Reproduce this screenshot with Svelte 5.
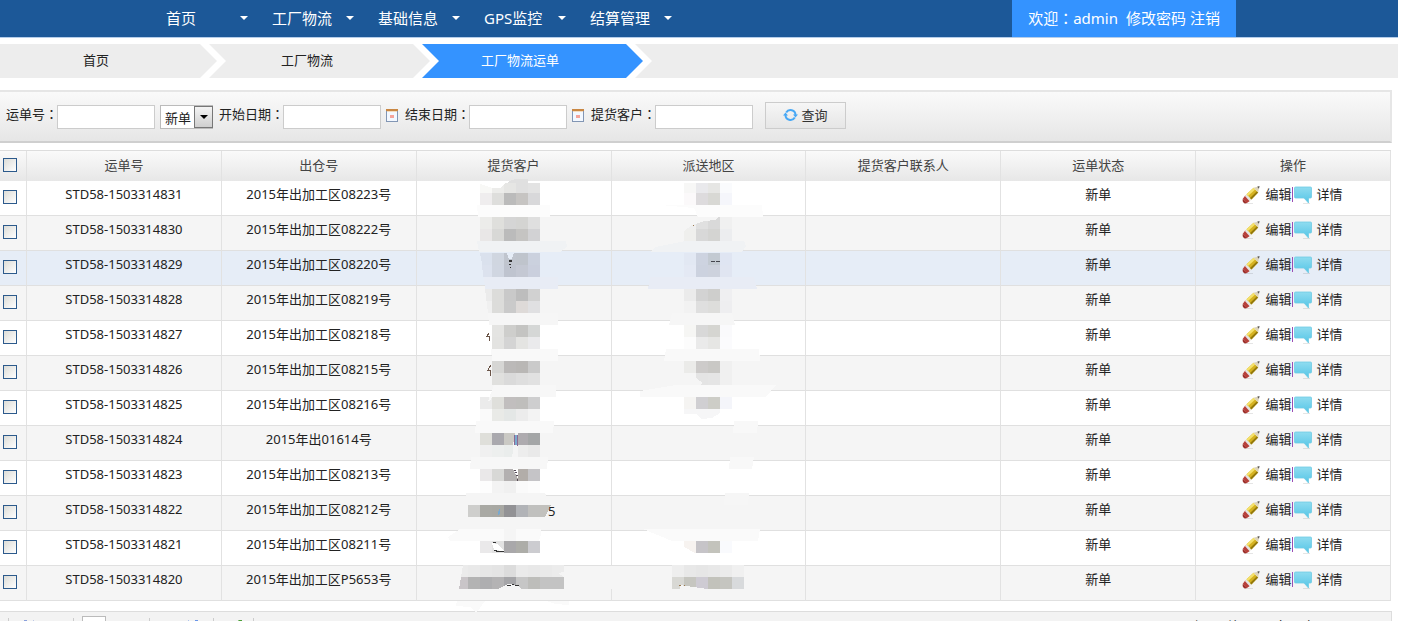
<script>
  const menus = ['首页', '工厂物流', '基础信息', 'GPS监控', '结算管理'];
  const crumbs = ['首页', '工厂物流', '工厂物流运单'];
  const heads = ['运单号', '出仓号', '提货客户', '派送地区', '提货客户联系人', '运单状态', '操作'];
  const outbound = [
    '2015年出加工区08223号', '2015年出加工区08222号', '2015年出加工区08220号',
    '2015年出加工区08219号', '2015年出加工区08218号', '2015年出加工区08215号',
    '2015年出加工区08216号', '2015年出01614号', '2015年出加工区08213号',
    '2015年出加工区08212号', '2015年出加工区08211号', '2015年出加工区P5653号'
  ];
  const rows = outbound.map((out, i) => ({ id: 'STD58-' + (1503314831 - i), out }));

  // Pixelated masks over private values: [x, y, height, cell colours]
  const customerCells = [
    [480, 182, 10, 'f8f8f6 ececea e6e6e4 e0e0e0 e3e3e3'],
    [480, 192, 12, 'efedee dededc bbbbbb c6c4c2 d8d8da'],
    [480, 216, 12, 'ececea dfdfdc d5d5d5 d4d4d2 dfdfdf'],
    [480, 228, 12, 'e9e7e7 d8d8d6 bbbbbb c5c4c2 d2d2d4'],
    [480, 252, 12, 'dae1ed d0d6e0 c0c5ce bfc4cc cbd1de'],
    [480, 264, 12, 'dce2ee d0d6e1 bfc4cf c4c8d3 cacfdd'],
    [480, 288, 12, 'ebebeb dcdcda c9c9c9 bdbdbd d1d1d1'],
    [480, 300, 12, 'f0f0f0 dcdcda cacaca dedad8 e0e0e2'],
    [492, 324, 12, 'e4e4e2 cececc c4c4c2 d5d7d6'],
    [492, 336, 12, 'e3e3e1 d4d4d4 e4e4e2 eaeaec'],
    [492, 360, 12, 'd6d6d4 bbb9b8 b9b7b5 cacaca'],
    [492, 372, 12, 'e0e0de dadada dedede e1e1e1'],
    [480, 396, 12, 'ebebeb dfdfdb c1bebe bfbebc cececf'],
    [480, 408, 12, 'fafafa e9eae7 e4e7e6 ececec f3f3f3'],
    [480, 432, 12, 'dfdfda aaa9ae cac9c4 aeabaf a4a6a7'],
    [480, 444, 12, 'f0f0f0 edefee eaedec ededed e9e9e9'],
    [480, 468, 12, 'eae8e9 d8d8d6 b3b0b0 b2ada9 c5c4c7'],
    [480, 480, 12, 'fdfdfd f3f3f3 f0f0f0 fafafa fcfcfc'],
    [468, 504, 12, 'cececc a9a9a4 a8a8a3 929295 b1b3b7 c0c0be'],
    [480, 540, 12, 'eae9ea e2e2e2 a9a8aa adada8 ccccd0'],
    [468, 564, 12, 'e9e9e9 e6e6e6 e4e4e4 dcdcdc eaeaea e8e8e8 eaeaea ececec'],
    [468, 576, 12, 'b3b3b3 aeaeb0 b4b3b4 a5a5a8 c6c6c6 bdbdba c3c3c3 c3c3c3']
  ];
  const customerShapes = [
    ['480,181 480,183 492,187 500,187 507,180 504,180', 'ffffff'],
    ['507,182 512,179 516,178 528,178 528,182', 'e0e0e0'],
    ['477,204 550,204 550,216 478,216', 'fcfcfc'],
    ['477,240 566,240 567,246 560,251 479,251', 'f0f2f4'],
    ['507,252 514,252 512,258 509,258', 'e6edf7'],
    ['480,252 480,276 483,276 482,262', 'e6edf7'],
    ['484,276 558,276 558,288 485,288', 'e8ecf5'],
    ['480,288 485,288 488,312 480,312', 'f5f5f5'],
    ['488,312 558,312 558,324 489,324', 'f6f6f6'],
    ['491,348 558,348 558,360 492,360', 'f9f9f9'],
    ['494,384 556,384 556,396 492,396 490,400 488,400', 'f7f7f7'],
    ['476,420 554,420 553,432 475,432', 'f9f9f9'],
    ['513,444 515,432 518,432 518,444 518,468 512,462', 'f5f5f5'],
    ['471,456 548,456 547,468 470,468', 'f7f7f7'],
    ['513,468 518,468 518,478', 'ffffff'],
    ['466,492 545,492 547,497 545,504 464,504', 'f5f5f5'],
    ['540,504 551,504 545,516 540,516', 'c2c1bd'],
    ['460,528 541,528 541,534 539,540 450,540 448,536', 'fafafa'],
    ['492,542 498,543 504,550 494,549', 'ffffff'],
    ['504,528 516,528 516,540 504,540', 'f5f5f5'],
    ['463,564 468,564 468,576 461,576', 'ebebeb'],
    ['461,576 468,576 468,588 459,588', 'c9c5c8'],
    ['498,588 508,583 518,584 521,588', 'f5f5f5'],
    ['558,572 595,565 612,565 612,588 600,590 564,588 564,576', 'f5f5f5'],
    ['457,600 485,600 480,607 476,611 470,606 456,605', 'fafafa'],
    ['546,600 569,600 569,604 555,603', 'fafafa']
  ];
  const areaCells = [
    [684, 182, 10, 'f7f7f6 e9e9ec e6e6e4 fafbfd'],
    [684, 192, 12, 'fbf9fa dddbdd d8d8d4 f5f6fb'],
    [684, 216, 12, 'efefef e0e0e0 d9d9d9 f0f0f0'],
    [684, 228, 12, 'efefed d8d8d8 d4d4d2 ecedef'],
    [684, 252, 12, 'e2e8f3 cdd3e0 c3cad2 dfe5f2'],
    [684, 264, 12, 'e4e9f4 ccd2df cdd2dd e0e5f1'],
    [684, 288, 12, 'ebebeb d3d3d3 cececc efeff1'],
    [684, 300, 12, 'f2f2f2 dfdfdf dddddb eeeef0'],
    [684, 324, 12, 'f6f6f4 d8d8d8 d5d5d1 fafafc'],
    [684, 336, 12, 'fcfcfc eaeaea e6e6e4 fbfbfd'],
    [684, 360, 12, 'ebebe9 cdcbca c9c8c5 f0f0f0'],
    [684, 372, 12, 'f5f5f5 e4e4e4 e5e5e5 f0f0f0'],
    [684, 396, 12, 'f5f4f2 d0cfd2 cdcdc7 f4f5fa'],
    [684, 540, 12, 'f7f3f0 c6c4c8 c3c3bc f9fafd'],
    [672, 564, 12, 'eeeeee e8e8e8 e6e6e6 e8e8e8 ebebeb f0f0f0'],
    [672, 576, 12, 'd8d8d4 c6c6c0 cecbd3 c2c2bb c5c5c0 d8dadc']
  ];
  const areaShapes = [
    ['660,204 762,204 763,216 698,216 694,207', 'fcfcfc'],
    ['684,216 718,216 716,219 704,220 692,224 684,230', 'f5f5f5'],
    ['686,240 744,240 746,245 742,251 651,251 655,246', 'f0f2f4'],
    ['650,276 754,276 757,288 648,288', 'e8ecf5'],
    ['672,312 732,312 735,324 669,324', 'f6f6f6'],
    ['666,348 759,348 760,360 664,360', 'f9f9f9'],
    ['684,372 696,372 696,377 703,382 700,384 684,384', 'f5f5f5'],
    ['640,390 676,384 776,384 766,396 640,396', 'f9f9f9'],
    ['684,408 720,408 720,412 712,417 702,418 696,413 684,413', 'f6f6f7'],
    ['734,420 758,420 757,432 733,432', 'f8f8f8'],
    ['730,456 754,456 752,468 729,468', 'f8f8f8'],
    ['725,492 749,492 748,504 724,504', 'f6f6f6'],
    ['643,528 760,528 758,540 672,540', 'fafafa'],
    ['684,546 695,552 684,552', 'ffffff'],
    ['680,584 707,588 680,588', 'f5f5f5']
  ];
</script>

{#snippet mask(cells, shapes)}
  {#each cells as [x, y, h, colours]}
    {#each colours.split(' ') as c, i}
      <rect x={x + i * 12} {y} width="12" height={h} fill={'#' + c} />
    {/each}
  {/each}
  {#each shapes as [points, c]}
    <polygon {points} fill={'#' + c} />
  {/each}
{/snippet}

{#snippet calendar(name)}
  <button class="icon-btn cal" aria-label={name}>
    <svg width="12" height="13" viewBox="0 0 12 13">
      <rect x=".5" y="1.5" width="11" height="11" fill="#f3f8ff" stroke="#8296b4" />
      <rect width="12" height="2" fill="#c98743" />
      <rect x="1" y="2" width="10" height="1" fill="#f4dcc0" />
      <rect x="4" y="6" width="4" height="3" fill="#f5a49b" />
    </svg>
  </button>
{/snippet}

<div class="page">
  <header class="topbar">
    <nav>
      {#each menus as m}
        <button class="menu">{m}<span class="caret"></span></button>
      {/each}
    </nav>
    <div class="user">
      <span class="welcome">欢迎<span class="colon">：</span>admin</span>
      <a href="#password">修改密码</a>
      <a href="#logout">注销</a>
    </div>
  </header>

  <nav class="crumbs">
    {#each crumbs as c, i}
      <a href="#crumb" class="crumb" class:root={i === 0} class:active={i === 2}>{c}</a>
    {/each}
    <span class="tail"></span>
  </nav>

  <form class="search" onsubmit={(e) => e.preventDefault()}>
    <label for="no">运单号<span class="colon">：</span></label>
    <input id="no" type="text" />
    <span class="select">
      <select aria-label="状态"><option>新单</option></select>
      <span class="arrow"><span></span></span>
    </span>
    <label for="from">开始日期<span class="colon">：</span></label>
    <input id="from" type="text" />
    {@render calendar('开始日期')}
    <label for="to">结束日期<span class="colon">：</span></label>
    <input id="to" type="text" />
    {@render calendar('结束日期')}
    <label for="cust">提货客户<span class="colon">：</span></label>
    <input id="cust" type="text" />
    <button class="query">
      <svg width="15" height="14" viewBox="0 0 15 14" fill="none" stroke="#48a8f5" stroke-width="2">
        <path d="M3.200 4.500A5 5 0 0 1 12.500 7M11.800 9.500A5 5 0 0 1 2.500 7" />
        <path d="M10 6.500h5l-2.500 3zM0 7.500h5L2.500 4.500z" fill="#48a8f5" stroke="none" />
      </svg>
      查询
    </button>
  </form>

  <table>
    <colgroup><col class="tick" /></colgroup>
    <thead>
      <tr>
        <th><input type="checkbox" aria-label="全选" /></th>
        {#each heads as h}<th>{h}</th>{/each}
      </tr>
    </thead>
    <tbody>
      {#each rows as r, i}
        <tr class:hover={i === 2}>
          <td><input type="checkbox" aria-label={r.id} /></td>
          <td>{r.id}</td>
          <td>{r.out}</td>
          <td class="masked">
            {#if i === 0}
              <svg class="mask customer" width="180" height="450" viewBox="440 170 180 450" shape-rendering="crispEdges">
                {@render mask(customerCells, customerShapes)}
                <g fill="#333">
                  <path d="M509 259h3v2h-3zM509 263h2v1h-2zM510 266h1v1h-1zM493 541h3v1h-3zM496 550h8v1h-8zM494 549h3v1h-3z" />
                  <path d="M507 584h4v1h-4zM512 583h2v1h-2zM515 584h4v1h-4z" />
                </g>
                <path d="M514 434h1v10h-1zM517 434h1v11h-1z" fill="#8d6a93" />
                <path d="M515 434h2v10h-2zM498 510h1v4h-1zM499 508h1v5h-1z" fill="#79a9cf" />
                <path d="M514 469h2v1h-2zM515 471h2v1h-2zM516 474h2v1h-2zM517 478h1v2h-1z" fill="#554a58" />
                <path d="M489 332l-2 3h2v5M491 364l-3 5h2v6" fill="none" stroke="#6b5548" />
                <text x="548" y="515">5</text>
              </svg>
            {/if}
          </td>
          <td class="masked">
            {#if i === 0}
              <svg class="mask area" width="150" height="450" viewBox="630 170 150 450" shape-rendering="crispEdges">
                {@render mask(areaCells, areaShapes)}
                <path d="M711 260h4v1h-4zM716 260h4v1h-4z" fill="#44454d" />
                <path d="M693 224h1v1h-1zM679 584h2v1h-2zM684 584h1v1h-1z" fill="#9b7a50" />
              </svg>
            {/if}
          </td>
          <td></td>
          <td>新单</td>
          <td>
            <div class="ops">
              <a href="#edit" class="edit">
                <svg width="18" height="18" viewBox="0 0 18 18">
                  <path d="M2 17.500h9" stroke="#000" stroke-opacity=".1" />
                  <path d="M.8 12.800 4.600 17.200 8.200 14.800 3.400 9.200z" fill="#b8403a" />
                  <path d="M.8 12.800Q0 16.800 3 17.400L4.800 17.100z" fill="#9c2f2b" />
                  <path d="M2.900 9.900 7.600 15.200 9.400 13.600 4.500 8.300z" fill="#e5e5e2" />
                  <path d="M4.500 8.300 11.600 1.800 16.200 6.600 9.400 13.600z" fill="#d5b221" />
                  <path d="M4.500 8.300 11.600 1.800 13.200 3.400 6 10z" fill="#f4e16b" />
                  <path d="M8 12.100 15 5.300 16.200 6.600 9.400 13.600z" fill="#94790c" />
                  <path d="M11.600 1.800 17.300 .2 16.200 6.600z" fill="#dcd3bb" />
                  <path d="M15.200.8 17.500.1 17 2.700z" fill="#555" />
                </svg>编辑</a><span class="bar"></span><a href="#detail" class="detail">
                <svg width="18" height="18" viewBox="0 0 18 18">
                  <defs>
                    <linearGradient id={'bubble' + i} x1="0" y1="0" x2="0" y2="1">
                      <stop offset="0" stop-color="#8fdcf0" />
                      <stop offset="1" stop-color="#55c5e6" />
                    </linearGradient>
                  </defs>
                  <path d="M9 17.500h7" stroke="#000" stroke-opacity=".1" />
                  <path d="M1.500 1h15q1 0 1 1v9q0 1-1 1H14.500v5L10 12H1.500q-1 0-1-1V2q0-1 1-1z" fill="url(#{'bubble' + i})" stroke="#6fcbe5" stroke-width=".8" />
                </svg>详情</a>
            </div>
          </td>
        </tr>
      {/each}
    </tbody>
  </table>

  <footer class="pager">
    <div class="tools">
      <i class="sep"></i>
      <button class="icon-btn prev" aria-label="上一页">
        <svg width="12" height="12" viewBox="0 0 12 12" fill="#8aa0dc"><path d="M0 0h3v12H0zM10 0v12L4 6z" /></svg>
      </button>
      <i class="sep"></i>
      <input type="text" aria-label="页码" />
      <i class="sep"></i>
      <button class="icon-btn next" aria-label="下一页">
        <svg width="12" height="12" viewBox="0 0 12 12" fill="#6a96e8"><path d="M9 0h3v12H9zM2 0v12L8 6z" /></svg>
      </button>
      <i class="sep"></i>
      <button class="icon-btn reload" aria-label="刷新">
        <svg width="14" height="14" viewBox="0 0 14 14" fill="none" stroke="#4c9f38" stroke-width="2"><path d="M12 8A5 5 0 1 1 9 2.500" /><path d="M7 0h4v5z" fill="#4c9f38" stroke="none" /></svg>
      </button>
      <i class="sep"></i>
    </div>
    <span class="status">显示从1到12，总 1234 条 。每页显示</span>
  </footer>
</div>

<style>
  :global(body) { background: #fff; }
  .page {
    height: 100vh;
    overflow: hidden;
    font: 13px/20px "Noto Sans", "Noto Sans CJK SC", sans-serif;
    color: #222;
  }
  .page *, .page { box-sizing: border-box; }
  button, input, select { font: inherit; color: inherit; margin: 0; }
  a { color: inherit; text-decoration: none; }
  .colon { font-family: "Noto Sans CJK TC", sans-serif; }

  .topbar {
    display: flex;
    justify-content: space-between;
    height: 38px;
    margin-right: 13px;
    padding: 0 162px 0 166px;
    background: #1c5898;
    border-bottom: 1px solid #b4cdea;
    color: #fff;
    font-size: 15px;
  }
  .topbar nav { display: flex; }
  .menu {
    display: flex;
    align-items: center;
    justify-content: space-between;
    width: 106px;
    padding: 0 24px 2px 0;
    border: 0;
    background: none;
    white-space: nowrap;
  }
  .caret { border: 4px solid transparent; border-top-color: #fff; border-bottom: 0; }
  .user {
    display: flex;
    align-items: center;
    gap: 4px;
    padding: 0 16px 2px;
    background: #3493ff;
    white-space: nowrap;
  }
  .welcome { margin-right: 4px; }

  .crumbs { display: flex; height: 34px; margin: 6px 13px 0 0; }
  .crumb {
    width: 221px;
    margin-left: -8px;
    padding: 6px 25px 0 0;
    text-align: center;
    background: #ededed;
    clip-path: polygon(0 0, calc(100% - 17px) 0, 100% 50%, calc(100% - 17px) 100%, 0 100%, 17px 50%);
  }
  .crumb.root {
    width: 217px;
    margin-left: 0;
    clip-path: polygon(0 0, calc(100% - 17px) 0, 100% 50%, calc(100% - 17px) 100%, 0 100%);
  }
  .crumb.active { background: #3493ff; color: #fff; }
  .tail {
    flex: 1;
    margin-left: -8px;
    background: #ededed;
    clip-path: polygon(0 0, 100% 0, 100% 100%, 0 100%, 17px 50%);
  }

  .search {
    display: flex;
    align-items: flex-start;
    height: 53px;
    margin: 12px 19px 0 0;
    padding: 12px 0 0 6px;
    border: 2px solid #e6e6e6;
    border-left: 0;
    border-bottom-color: #cfcfcf;
    background: linear-gradient(#fafafa, #e6e6e6);
    white-space: nowrap;
  }
  .search label { width: 64px; }
  .search label:first-child { width: 51px; }
  .search input { width: 98px; height: 24px; margin-top: 1px; padding: 0 4px; border: 1px solid #ccc; background: #fff; }
  .select { position: relative; margin: 1px 6px 0 5px; }
  .select select {
    display: block;
    appearance: none;
    width: 53px;
    height: 24px;
    padding: 1px 0 0 4px;
    border: 1px solid #bbb;
    border-radius: 0;
    background: #fff;
  }
  .arrow {
    position: absolute;
    top: 1px;
    right: 0;
    display: grid;
    place-items: center;
    width: 19px;
    height: 22px;
    border: 1px solid #777;
    background: linear-gradient(#f4f4f4, #cfcfcf);
    pointer-events: none;
  }
  .arrow span { border: 4px solid transparent; border-top-color: #000; border-bottom: 0; }
  .icon-btn { display: block; padding: 0; border: 0; background: none; line-height: 0; }
  .cal { margin: 5px 7px 0 5px; }
  .query {
    display: flex;
    align-items: center;
    justify-content: center;
    gap: 3px;
    width: 81px;
    height: 27px;
    margin: -2px 0 0 12px;
    padding: 0 0 2px;
    border: 1px solid #ccc;
    background: linear-gradient(#f6f6f6, #e6e6e6);
    color: #333;
  }

  table {
    width: calc(100% - 20px);
    margin-top: 7px;
    table-layout: fixed;
    border-collapse: separate;
    border-spacing: 0;
    border-top: 1px solid #ddd;
  }
  .tick { width: 27px; }
  th, td { border-right: 1px solid #e2e2e2; text-align: center; white-space: nowrap; }
  th {
    height: 30px;
    padding: 0 0 2px;
    background: linear-gradient(#fafafa, #e7e7e7);
    font-weight: 400;
    color: #444;
  }
  td { height: 35px; padding: 0 0 8px; border-bottom: 1px solid #e0e0e0; }
  tbody tr:nth-child(even) { background: #f5f5f5; }
  tbody tr.hover { background: #e6edf7; }
  th:first-child, td:first-child { padding: 0 0 2px 3px; text-align: left; }
  td:first-child { padding-bottom: 3px; }
  input[type='checkbox'] {
    display: block;
    appearance: none;
    width: 14px;
    height: 14px;
    border: 1px solid #2c5a8c;
    background: linear-gradient(135deg, #dcdcd7, #fff);
  }
  .masked { position: relative; }
  .mask { position: absolute; top: -10px; pointer-events: none; z-index: 1; }
  .mask text { font-size: 13px; fill: #222; }
  .customer { left: calc(50% - 74px); }
  .area { left: calc(50% - 78px); }

  .ops { display: flex; align-items: center; justify-content: center; height: 20px; padding-right: 2px; }
  .ops a { display: flex; align-items: center; }
  .edit { gap: 6px; }
  .detail { gap: 5px; }
  .ops svg { margin-top: 2px; }
  .bar { width: 1px; height: 15px; margin-right: 1px; background: #9a4fb5; }

  .pager {
    display: flex;
    justify-content: space-between;
    height: 34px;
    margin: 10px 19px 0 0;
    padding: 4px 34px 0 8px;
    border: 1px solid #ddd;
    border-left: 0;
    background: #f3f3f3;
  }
  .tools { display: flex; align-items: flex-start; }
  .sep { width: 1px; height: 24px; margin-top: 2px; background: #ccc; }
  .pager input { width: 24px; height: 24px; margin: 0 43px 0 8px; padding: 0 2px; border: 1px solid #bbb; }
  .pager .icon-btn { margin-top: 4px; }
  .prev { margin: 0 37px 0 15px; }
  .next { margin: 0 15px 0 36px; }
  .reload { margin: 0 8px 0 17px; }
  .status { white-space: nowrap; }
</style>
